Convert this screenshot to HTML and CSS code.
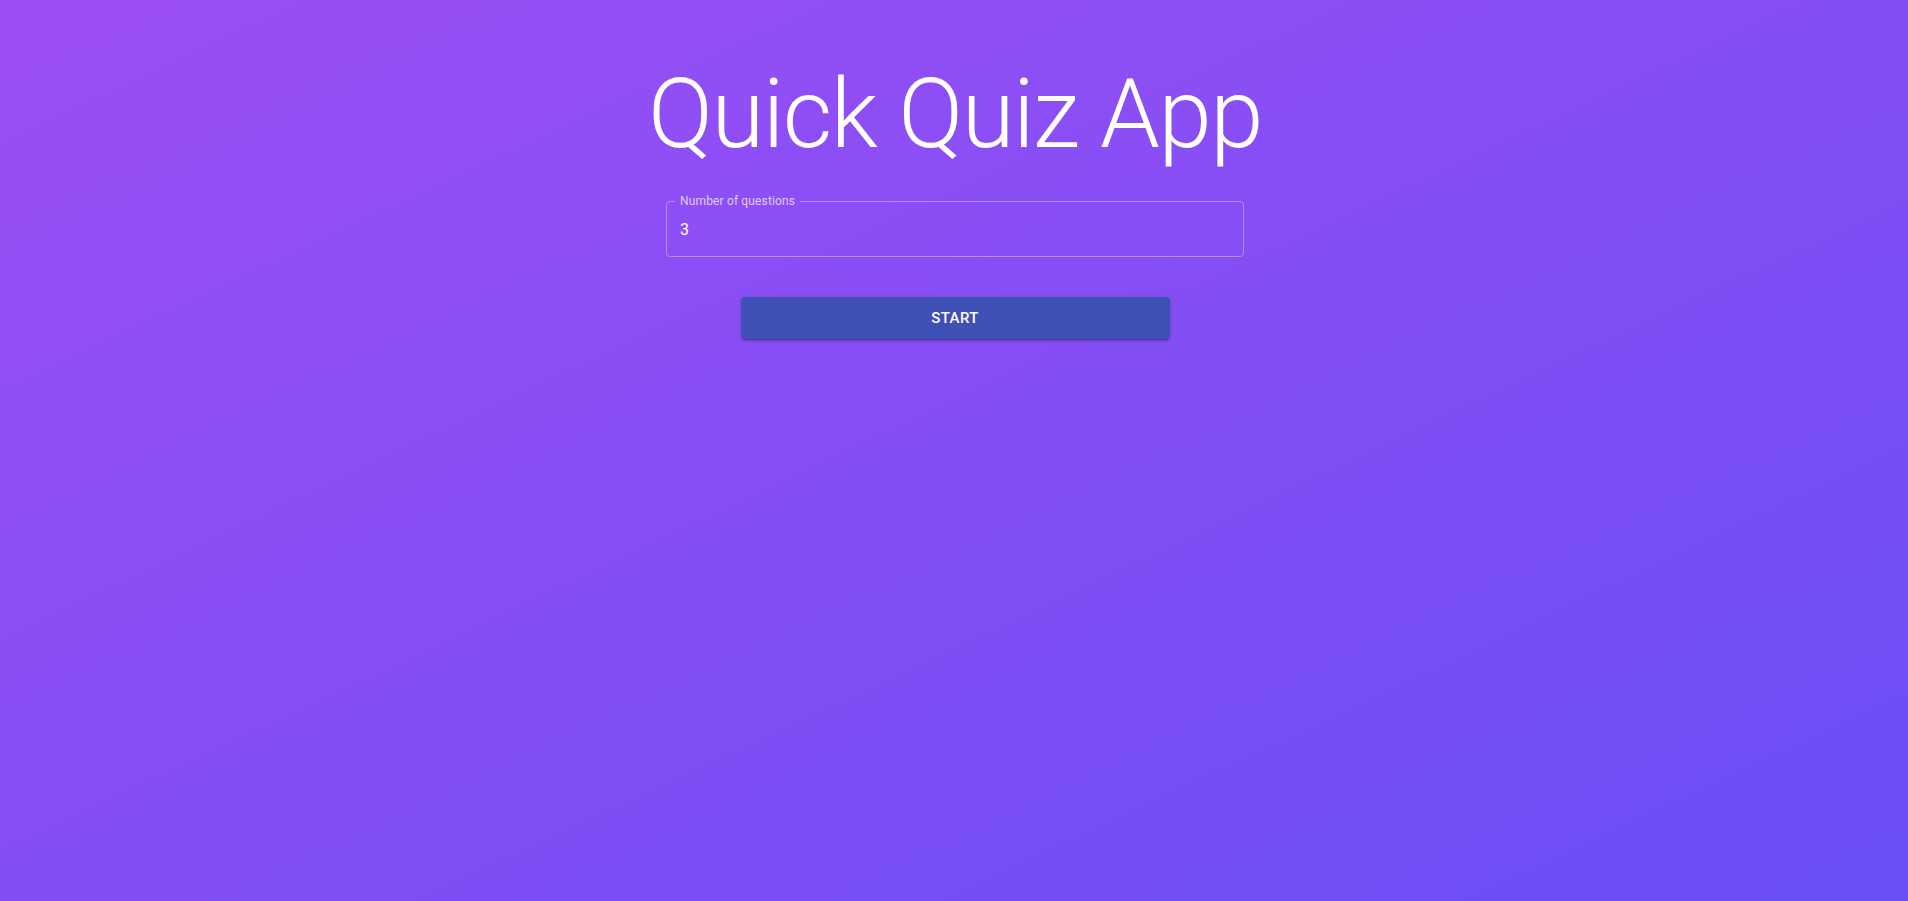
FILE: index.html
```html
<!DOCTYPE html>
<html lang="en">
<head>
<meta charset="utf-8">
<title>Quick Quiz App</title>
<link rel="stylesheet" href="styles.css">
</head>
<body>
<main class="app">
  <h1 class="title">Quick Quiz App</h1>
  <form class="form">
    <div class="field">
      <input class="field-input" type="number" value="3" aria-label="Number of questions">
      <fieldset class="field-outline" aria-hidden="true">
        <legend class="field-legend">Number of questions</legend>
      </fieldset>
    </div>
    <button class="start-btn" type="button">Start</button>
  </form>
</main>
</body>
</html>
```
FILE: styles.css
```css
html, body {
  margin: 0;
  padding: 0;
  height: 100%;
}
body {
  background: linear-gradient(to bottom right, #9d4ef5, #6a4ef5);
  font-family: Roboto, "Liberation Sans", sans-serif;
  color: #fff;
  overflow: hidden;
}
.app {
  display: flex;
  flex-direction: column;
  align-items: center;
  padding-top: 58px;
  padding-left: 2px;
}
.title {
  margin: 0;
  font-size: 96px;
  font-weight: 300;
  line-height: 1.167;
  letter-spacing: -0.01562em;
  color: #fff;
}
.form {
  display: flex;
  flex-direction: column;
  align-items: center;
  gap: 40px;
  margin-top: 31px;
}
.field {
  position: relative;
  box-sizing: border-box;
  width: 578px;
  height: 56px;
  padding: 0 14px;
  display: flex;
  align-items: center;
}
.field-outline {
  position: absolute;
  top: -4px;
  left: 0;
  right: 0;
  bottom: 0;
  margin: 0;
  padding: 0 8px;
  border: 1px solid rgba(255, 255, 255, 0.35);
  border-radius: 4px;
  pointer-events: none;
}
.field-legend {
  padding: 0 5px;
  font-size: 12px;
  line-height: 8px;
  letter-spacing: 0.0125em;
  color: rgba(255, 255, 255, 0.72);
}
.field-input {
  position: relative;
  z-index: 1;
  background: transparent;
  border: 0;
  outline: none;
  color: #fff;
  font-family: Roboto, "Liberation Sans", sans-serif;
  font-size: 16px;
  line-height: 19px;
  letter-spacing: 0.00938em;
  width: 100%;
  padding: 0;
  margin: 0;
  -moz-appearance: textfield;
}
.field-input::-webkit-inner-spin-button,
.field-input::-webkit-outer-spin-button {
  -webkit-appearance: none;
  margin: 0;
}
.start-btn {
  width: 429px;
  height: 42px;
  border: 0;
  border-radius: 4px;
  background: #3f51b5;
  color: #fff;
  font-family: Roboto, "Liberation Sans", sans-serif;
  font-size: 15px;
  font-weight: 500;
  letter-spacing: 0.02857em;
  text-transform: uppercase;
  box-shadow: 0 3px 1px -2px rgba(0,0,0,0.2), 0 2px 2px 0 rgba(0,0,0,0.14), 0 1px 5px 0 rgba(0,0,0,0.12);
  cursor: pointer;
}
```
